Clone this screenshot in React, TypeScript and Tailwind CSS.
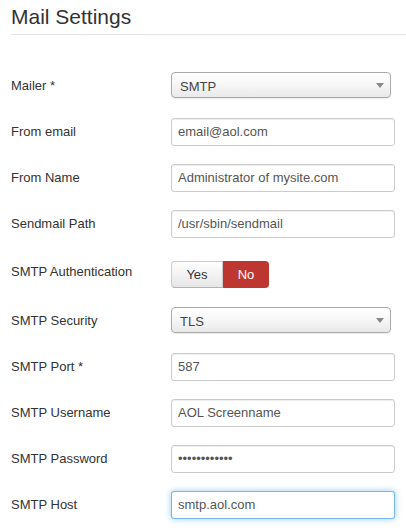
const font = { fontFamily: '"Liberation Sans", Arial, sans-serif' };

type Row = {
  label: string;
  kind: "select" | "input" | "password" | "toggle" | "focus";
  value?: string;
  gap: string;
};

const rows: Row[] = [
  { label: "Mailer *", kind: "select", value: "SMTP", gap: "mt-[37px]" },
  { label: "From email", kind: "input", value: "email@aol.com", gap: "mt-[20px]" },
  { label: "From Name", kind: "input", value: "Administrator of mysite.com", gap: "mt-[18px]" },
  { label: "Sendmail Path", kind: "input", value: "/usr/sbin/sendmail", gap: "mt-[18px]" },
  { label: "SMTP Authentication", kind: "toggle", gap: "mt-[23px]" },
  { label: "SMTP Security", kind: "select", value: "TLS", gap: "mt-[19px]" },
  { label: "SMTP Port *", kind: "input", value: "587", gap: "mt-[20px]" },
  { label: "SMTP Username", kind: "input", value: "AOL Screenname", gap: "mt-[18px]" },
  { label: "SMTP Password", kind: "password", value: "••••••••••••", gap: "mt-[18px]" },
  { label: "SMTP Host", kind: "focus", value: "smtp.aol.com", gap: "mt-[18px]" },
];

function Select({ value }: { value?: string }) {
  return (
    <div className="flex items-center justify-between w-[220px] h-[26px] pl-[8px] pr-[6px] border border-[#aaa] rounded-[4px] bg-gradient-to-b from-white via-[#f6f6f6] to-[#e9e9e9] shadow-[0_1px_1px_rgba(0,0,0,0.08)]">
      <span className="text-[13px] leading-[22px] pt-[3px] text-[#444]">{value}</span>
      <span className="w-0 h-0 border-l-[4px] border-r-[4px] border-t-[5px] border-l-transparent border-r-transparent border-t-[#888]" />
    </div>
  );
}

function TextBox({ value, focus }: { value?: string; focus?: boolean }) {
  return (
    <div
      className={
        focus
          ? "w-[224px] h-[28px] px-[6px] border border-[rgba(82,168,236,0.8)] rounded-[3px] bg-white shadow-[0_0_6px_rgba(82,168,236,0.6)] text-[13px] leading-[26px] text-[#555]"
          : "w-[224px] h-[28px] px-[6px] border border-[#ccc] rounded-[3px] bg-white shadow-[inset_0_1px_1px_rgba(0,0,0,0.07)] text-[13px] leading-[26px] text-[#555]"
      }
    >
      {value}
    </div>
  );
}

function Toggle() {
  return (
    <div className="flex h-[27px] text-[13px]">
      <div className="w-[52px] flex items-center justify-center border border-[#ccc] border-b-[#b3b3b3] rounded-l-[4px] bg-gradient-to-b from-white to-[#e6e6e6] text-[#333]">
        Yes
      </div>
      <div className="w-[46px] flex items-center justify-center rounded-r-[4px] bg-[#bd362f] text-white">
        No
      </div>
    </div>
  );
}

export default function App() {
  return (
    <div className="w-[406px] h-[531px] bg-white pl-[11px] overflow-hidden" style={font}>
      <div className="h-[35px] leading-[34px] text-[21px] text-[#333] border-b border-[#e5e5e5]">
        Mail Settings
      </div>
      {rows.map((r) => (
        <div key={r.label} className={`flex ${r.gap}`}>
          <div
            className={
              r.kind === "toggle"
                ? "w-[160px] pt-[2px] text-[13px] leading-[18px] text-[#333]"
                : "w-[160px] pt-[5px] text-[13px] leading-[18px] text-[#333]"
            }
          >
            {r.label}
          </div>
          {r.kind === "select" && <Select value={r.value} />}
          {r.kind === "input" && <TextBox value={r.value} />}
          {r.kind === "password" && <TextBox value={r.value} />}
          {r.kind === "focus" && <TextBox value={r.value} focus />}
          {r.kind === "toggle" && <Toggle />}
        </div>
      ))}
    </div>
  );
}
